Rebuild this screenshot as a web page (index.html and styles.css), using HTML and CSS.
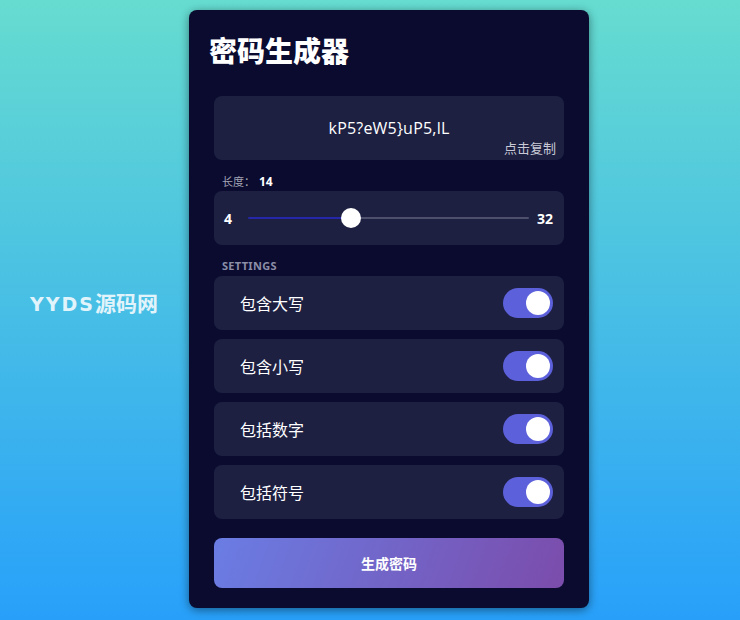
FILE: index.html
```html
<!DOCTYPE html>
<html lang="zh-CN">
<head>
  <meta charset="UTF-8">
  <title>密码生成器</title>
  <link rel="stylesheet" href="styles.css">
</head>
<body>
  <div class="watermark"><span class="wm-latin">YYDS</span>源码网</div>
  <div class="card">
    <h1 class="title">密码生成器</h1>
    <div class="content">
      <div class="result">
        <span class="result-text">kP5?eW5}uP5,lL</span>
        <span class="copy-tip">点击复制</span>
      </div>

      <div class="field-label">长度：<b>14</b></div>
      <div class="box slider-box">
        <span class="range-num">4</span>
        <input type="range" class="range" min="4" max="32" value="14" style="--fill: 36.5%">
        <span class="range-num">32</span>
      </div>

      <div class="field-label settings-label">SETTINGS</div>
      <div class="settings">
        <div class="box setting">
          <span>包含大写</span>
          <span class="toggle"><span class="knob"></span></span>
        </div>
        <div class="box setting">
          <span>包含小写</span>
          <span class="toggle"><span class="knob"></span></span>
        </div>
        <div class="box setting">
          <span>包括数字</span>
          <span class="toggle"><span class="knob"></span></span>
        </div>
        <div class="box setting">
          <span>包括符号</span>
          <span class="toggle"><span class="knob"></span></span>
        </div>
      </div>

      <button class="generate">生成密码</button>
    </div>
  </div>
</body>
</html>
```

FILE: styles.css
```css
* {
  box-sizing: border-box;
}

body {
  margin: 0;
  height: 620px;
  overflow: hidden;
  display: flex;
  align-items: flex-start;
  padding: 10px 0 0 189px;
  background: linear-gradient(to bottom, #66dcd0, #28a0fa);
  font-family: "Noto Sans", "Noto Sans CJK SC", sans-serif;
  color: #fff;
}

.watermark {
  position: absolute;
  left: 30px;
  top: 287px;
  font-size: 21px;
  font-weight: bold;
  color: #e2f4fb;
  font-family: "Noto Sans CJK SC", sans-serif;
}

.wm-latin {
  font-family: "DejaVu Sans", sans-serif;
  font-size: 19px;
  letter-spacing: 2px;
}

.card {
  width: 400px;
  height: 598px;
  padding: 20px 20px 21px;
  background: #0a0b2f;
  border-radius: 8px;
  box-shadow: 0 2px 10px rgba(0, 0, 0, 0.45);
}

.title {
  margin: 0;
  height: 40px;
  line-height: 40px;
  font-size: 28px;
  font-weight: 900;
  font-family: "Noto Sans CJK SC", sans-serif;
}

.content {
  padding: 0 5px;
}

.result {
  position: relative;
  margin-top: 26px;
  height: 64px;
  display: flex;
  align-items: center;
  justify-content: center;
  background: #1e2042;
  border-radius: 8px;
  font-size: 16px;
}

.result-text {
  font-family: "Open Sans", sans-serif;
  letter-spacing: 0.2px;
}

.copy-tip {
  position: absolute;
  right: 8px;
  bottom: 3px;
  font-size: 13px;
  color: #c9cad6;
  font-family: "Noto Sans CJK SC", sans-serif;
}

.field-label {
  margin: 14px 0 3px 8px;
  height: 14px;
  line-height: 14px;
  font-size: 11px;
  color: #a3a4b4;
  font-family: "Noto Sans CJK SC", sans-serif;
}

.field-label b {
  margin-left: 4px;
  color: #fff;
  font-size: 12px;
  font-family: "Noto Sans", sans-serif;
}

.settings-label {
  font-weight: bold;
  font-size: 11px;
  color: #8c8ea8;
  font-family: "Noto Sans", sans-serif;
  letter-spacing: 0.3px;
}

.box {
  background: #1e2042;
  border-radius: 8px;
}

.slider-box {
  height: 54px;
  display: flex;
  align-items: center;
  padding: 0 11px 0 10px;
}

.range-num {
  font-size: 14px;
  font-weight: bold;
  min-width: 14px;
}

.range {
  -webkit-appearance: none;
  appearance: none;
  flex: 1;
  margin: 0 8px 0 10px;
  height: 2px;
  border-radius: 1px;
  background: linear-gradient(to right, #2626a8 0 var(--fill), #4d4f6c var(--fill) 100%);
  outline: none;
}

.range::-webkit-slider-thumb {
  -webkit-appearance: none;
  width: 20px;
  height: 20px;
  border-radius: 50%;
  background: #fff;
  border: none;
}

.settings {
  display: flex;
  flex-direction: column;
  gap: 9px;
}

.setting {
  height: 54px;
  display: flex;
  align-items: center;
  justify-content: space-between;
  padding: 0 11px 0 26px;
  font-size: 16px;
  font-family: "Noto Sans CJK SC", sans-serif;
}

.toggle {
  width: 50px;
  height: 30px;
  border-radius: 15px;
  background: #5c60da;
  display: flex;
  align-items: center;
  justify-content: flex-end;
  padding: 0 3px;
}

.knob {
  width: 24px;
  height: 24px;
  border-radius: 50%;
  background: #fff;
}

.generate {
  display: block;
  width: 100%;
  height: 50px;
  margin-top: 19px;
  border: none;
  border-radius: 8px;
  background: linear-gradient(110deg, #6a7de4, #7b4cab);
  color: #fff;
  font-size: 14px;
  font-weight: bold;
  font-family: "Noto Sans CJK SC", sans-serif;
  cursor: pointer;
}
```
